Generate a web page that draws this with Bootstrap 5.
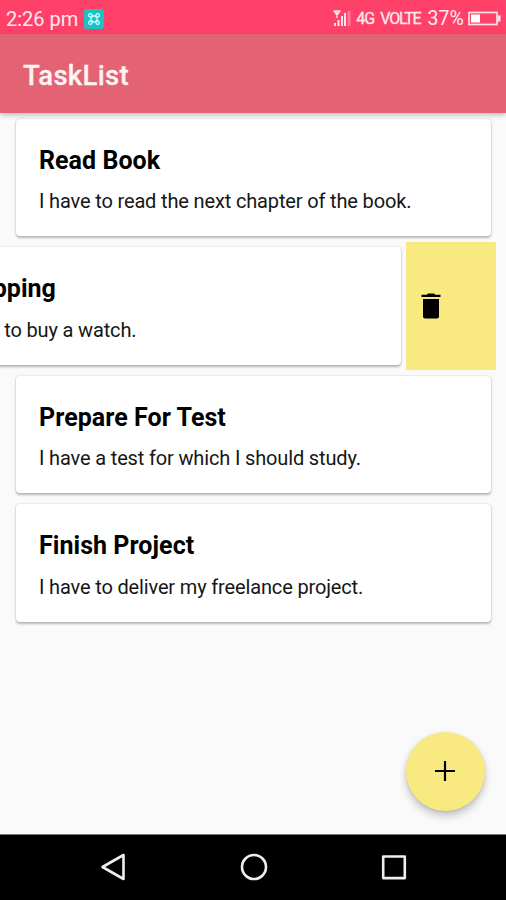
<!DOCTYPE html>
<html lang="en">
<head>
<meta charset="utf-8">
<meta name="viewport" content="width=device-width, initial-scale=1">
<title>TaskList</title>
<link href="https://cdn.jsdelivr.net/npm/bootstrap@5.3.0/dist/css/bootstrap.min.css" rel="stylesheet">
<style>
  body { font-family: Roboto, "Liberation Sans", sans-serif; color: #000; background: #fafafa; }
  .screen { height: 900px; }
  .status-bar { height: 34px; padding: 3px 5px 0 6px; background: #ff4169; color: #ffe9ee; font-size: 20px; line-height: 1; }
  .status-time { font-size: 20px; letter-spacing: -.02px; }
  .status-badge { margin-left: 6px; }
  .status-net { font-size: 16px; margin-left: 5px; letter-spacing: -.9px; }
  .status-lte { font-size: 16px; margin-left: 6px; letter-spacing: -1.2px; }
  .status-net, .status-lte { -webkit-text-stroke: .3px #ffe9ee; }
  .status-pct { font-size: 19.5px; margin-left: 7px; letter-spacing: .1px; padding-top: 1px; }
  .app-bar { height: 79px; padding: 5px 23px 0; background: #e36274; box-shadow: 0 2px 5px rgba(40,70,30,.32); z-index: 2; }
  .app-title { font-size: 27.5px; font-weight: 500; line-height: 1; color: #fff3f3; letter-spacing: .3px; -webkit-text-stroke: .3px #fff3f3; }
  .task-list { padding: 0 11px 0 11.5px; }
  .task-row { height: 128.6px; }
  .task-card { width: 475px; height: 117.4px; margin: 5.6px 4.5px; padding: 27px 23px 0; border: 0; border-radius: 4px; flex: none; box-shadow: 0 1.5px 2.5px rgba(0,0,0,.26), 0 0 2px rgba(0,0,0,.12); color: #000; }
  .task-card h2 { font-size: 25px; font-weight: 700; line-height: 30px; margin: 0 0 11.4px; letter-spacing: .05px; }
  .task-card p { font-size: 20px; line-height: 28px; margin: 0; color: #161616; white-space: nowrap; letter-spacing: -.15px; }
  .task-card.swiped { margin-left: -85.5px; margin-right: 5px; }
  .task-card.swiped p { margin-left: -1px; }
  .delete-action { width: 89.5px; padding: 1px 0 0 14px; background: #f8ea80; flex: none; }
  .add-btn, .add-btn:hover { width: 79px; height: 79px; margin: 0 21.5px 23px 0; background: #f8ea80; border: 0; box-shadow: 0 5px 9px rgba(0,0,0,.22), 0 1px 3px rgba(0,0,0,.1); }
  .nav-keys { height: 66.5px; background: #000; border-top: 1px solid #777; padding: 0 98px 1px 99px; }
</style>
<script src="https://cdn.jsdelivr.net/npm/bootstrap@5.3.0/dist/js/bootstrap.bundle.min.js"></script>
</head>
<body>
<div class="screen d-flex flex-column overflow-hidden">
  <div class="status-bar d-flex align-items-center flex-shrink-0">
    <span class="status-time">2:26 pm</span>
    <svg class="status-badge" width="20" height="20" viewBox="0 0 20 20" fill="none">
      <rect width="20" height="20" rx="3" fill="#1fc0c0"/>
      <path d="M8 8H6.200a1.700 1.700 0 1 1 1.800-1.800zM12 8V6.200A1.700 1.700 0 1 1 13.800 8zM8 12v1.800A1.700 1.700 0 1 1 6.200 12zM12 12h1.800a1.700 1.700 0 1 1-1.800 1.800zM8 7h4M8 13h4M7 8v4M13 8v4" stroke="#c9ffff" stroke-width="1.300"/>
    </svg>
    <svg class="ms-auto" width="18" height="19" viewBox="0 0 18 19" fill="none" stroke="#ffe3e9">
      <path d="M.5 2h7M4 2v7M1 2l3 4 3-4" stroke-width="1.500"/>
      <path d="M2 17v-3M5.500 17v-6M9 17V7M12 17V4" stroke-width="2"/>
      <path d="M16 17V2" stroke-width="3" opacity=".35"/>
    </svg>
    <span class="status-net">4G</span>
    <span class="status-lte">VOLTE</span>
    <span class="status-pct">37%</span>
    <svg class="ms-1" width="33" height="15" viewBox="0 0 33 15" fill="none">
      <rect x="1" y="1.500" width="28" height="12" stroke="#ffe3e9" stroke-width="1.700"/>
      <rect x="3" y="3.500" width="9" height="8" fill="#fff"/>
      <path d="M30 4.500h2.500v6H30z" fill="#ffe3e9"/>
    </svg>
  </div>
  <header class="app-bar d-flex align-items-center flex-shrink-0 position-relative">
    <h1 class="app-title m-0">TaskList</h1>
  </header>
  <main class="task-list flex-grow-1">
    <div class="task-row d-flex">
      <article class="card task-card"><h2>Read Book</h2><p>I have to read the next chapter of the book.</p></article>
    </div>
    <div class="task-row d-flex">
      <article class="card task-card swiped"><h2>Shopping</h2><p>I have to buy a watch.</p></article>
      <div class="delete-action d-flex align-items-center">
        <svg width="22" height="27" viewBox="0 0 22 27">
          <path d="M1.500 1.800h5.300L8 .5h6l1.200 1.300h5.300V4h-19zM3 6h16v17.500a2 2 0 0 1-2 2H5a2 2 0 0 1-2-2z"/>
        </svg>
      </div>
    </div>
    <div class="task-row d-flex">
      <article class="card task-card"><h2>Prepare For Test</h2><p>I have a test for which I should study.</p></article>
    </div>
    <div class="task-row d-flex">
      <article class="card task-card"><h2>Finish Project</h2><p>I have to deliver my freelance project.</p></article>
    </div>
  </main>
  <button class="btn add-btn rounded-circle p-0 align-self-end flex-shrink-0 d-flex align-items-center justify-content-center" aria-label="Add task">
    <svg width="20" height="20" viewBox="0 0 20 20" stroke="#000" stroke-width="2.200"><path d="M10 0v20M0 10h20"/></svg>
  </button>
  <nav class="nav-keys d-flex align-items-center justify-content-between flex-shrink-0">
    <svg width="28" height="28" viewBox="0 0 28 28" fill="none" stroke="#eee" stroke-width="2.600" stroke-linejoin="round"><path d="M24.500 2v24L3.500 14z"/></svg>
    <svg width="28" height="28" viewBox="0 0 28 28" fill="none" stroke="#eee" stroke-width="2.600"><circle cx="14" cy="14" r="12"/></svg>
    <svg width="28" height="28" viewBox="0 0 28 28" fill="none" stroke="#eee" stroke-width="2.600" stroke-linejoin="round"><path d="M3.200 3.500h21.600v21.600H3.200z"/></svg>
  </nav>
</div>
</body>
</html>
